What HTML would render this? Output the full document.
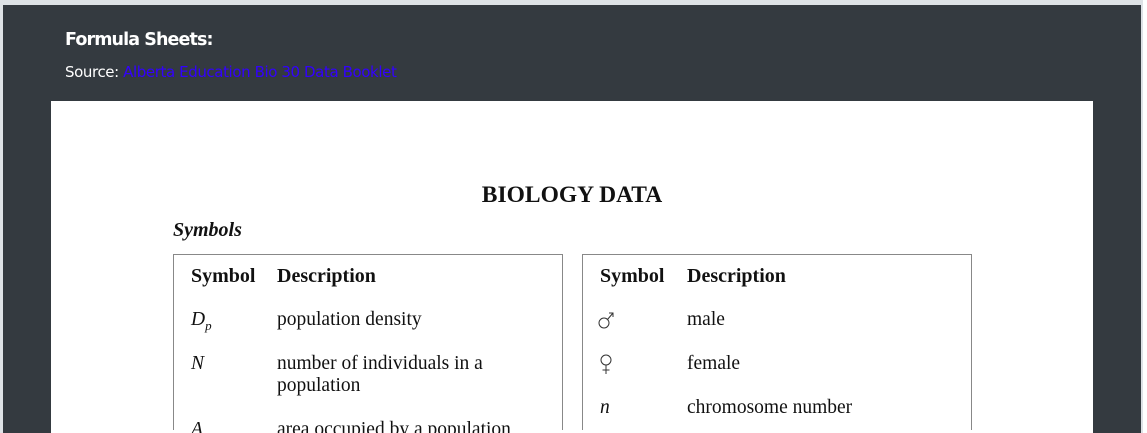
<!DOCTYPE html>
<html style="overflow:hidden;height:433px"><head><style>
html,body{overflow:hidden}
body{margin:0;width:1147px;height:433px;background:#fff;position:relative}
.bg{position:absolute;left:0;top:0;width:1143px;height:433px;background:#dee2e6}
.dark{position:absolute;left:3px;top:5px;width:1138px;height:428px;background:#343a40}
.h{position:absolute;left:65px;top:30px;color:#fff;font:bold 17.5px "DejaVu Sans",sans-serif;letter-spacing:-0.9px}
.s{position:absolute;left:65px;top:63px;color:#fff;font:15px "DejaVu Sans",sans-serif;letter-spacing:-0.4px}
.s a{color:#3300ff;text-decoration:none}
.w{position:absolute;left:51px;top:101px;width:1042px;height:332px;overflow:hidden;background:#fff;font-family:"Liberation Serif",serif;color:#111}
.t{position:absolute;left:0;width:1042px;top:81px;text-align:center;font-weight:bold;font-size:23.5px}
.sy{position:absolute;left:122px;top:118px;font-weight:bold;font-style:italic;font-size:20px}
.box{position:absolute;top:153px;width:388px;height:175px;border:1px solid #888;border-bottom:none;font-size:19.5px}
.r{position:absolute;white-space:nowrap}
.b{font-weight:bold;font-size:20px}
</style></head><body>
<div class="bg"></div><div class="dark"></div>
<div class="h">Formula Sheets:</div>
<div class="s">Source: <a>Alberta Education Bio 30 Data Booklet</a></div>
<div class="w">
<div class="t">BIOLOGY DATA</div>
<div class="sy">Symbols</div>
<div class="box" style="left:122px">
<div class="r b" style="left:17px;top:10px">Symbol</div>
<div class="r b" style="left:103px;top:10px">Description</div>
<div class="r" style="left:17px;top:54px;font-style:italic">D<sub style="font-size:13px">p</sub></div>
<div class="r" style="left:103px;top:54px">population density</div>
<div class="r" style="left:17px;top:98px;font-style:italic">N</div>
<div class="r" style="left:103px;top:98px;line-height:22px">number of individuals in a<br>population</div>
<div class="r" style="left:17px;top:164px;font-style:italic">A</div>
<div class="r" style="left:103px;top:164px">area occupied by a population</div>
</div>
<div class="box" style="left:531px">
<div class="r b" style="left:17px;top:10px">Symbol</div>
<div class="r b" style="left:104px;top:10px">Description</div>
<svg class="r" style="left:15px;top:54px" width="18" height="22" viewBox="0 0 18 22" fill="none" stroke="#333" stroke-width="1"><circle cx="6" cy="14" r="5"/><path d="M9.5 10.5L15 4M11 4h4v4"/></svg>
<div class="r" style="left:104px;top:54px">male</div>
<svg class="r" style="left:15px;top:98px" width="18" height="24" viewBox="0 0 18 24" fill="none" stroke="#333" stroke-width="1"><circle cx="8" cy="7" r="5"/><path d="M8 12v9M4.5 17h7"/></svg>
<div class="r" style="left:104px;top:98px">female</div>
<div class="r" style="left:17px;top:142px;font-style:italic">n</div>
<div class="r" style="left:104px;top:142px">chromosome number</div>
</div>
</div>
</body></html>
